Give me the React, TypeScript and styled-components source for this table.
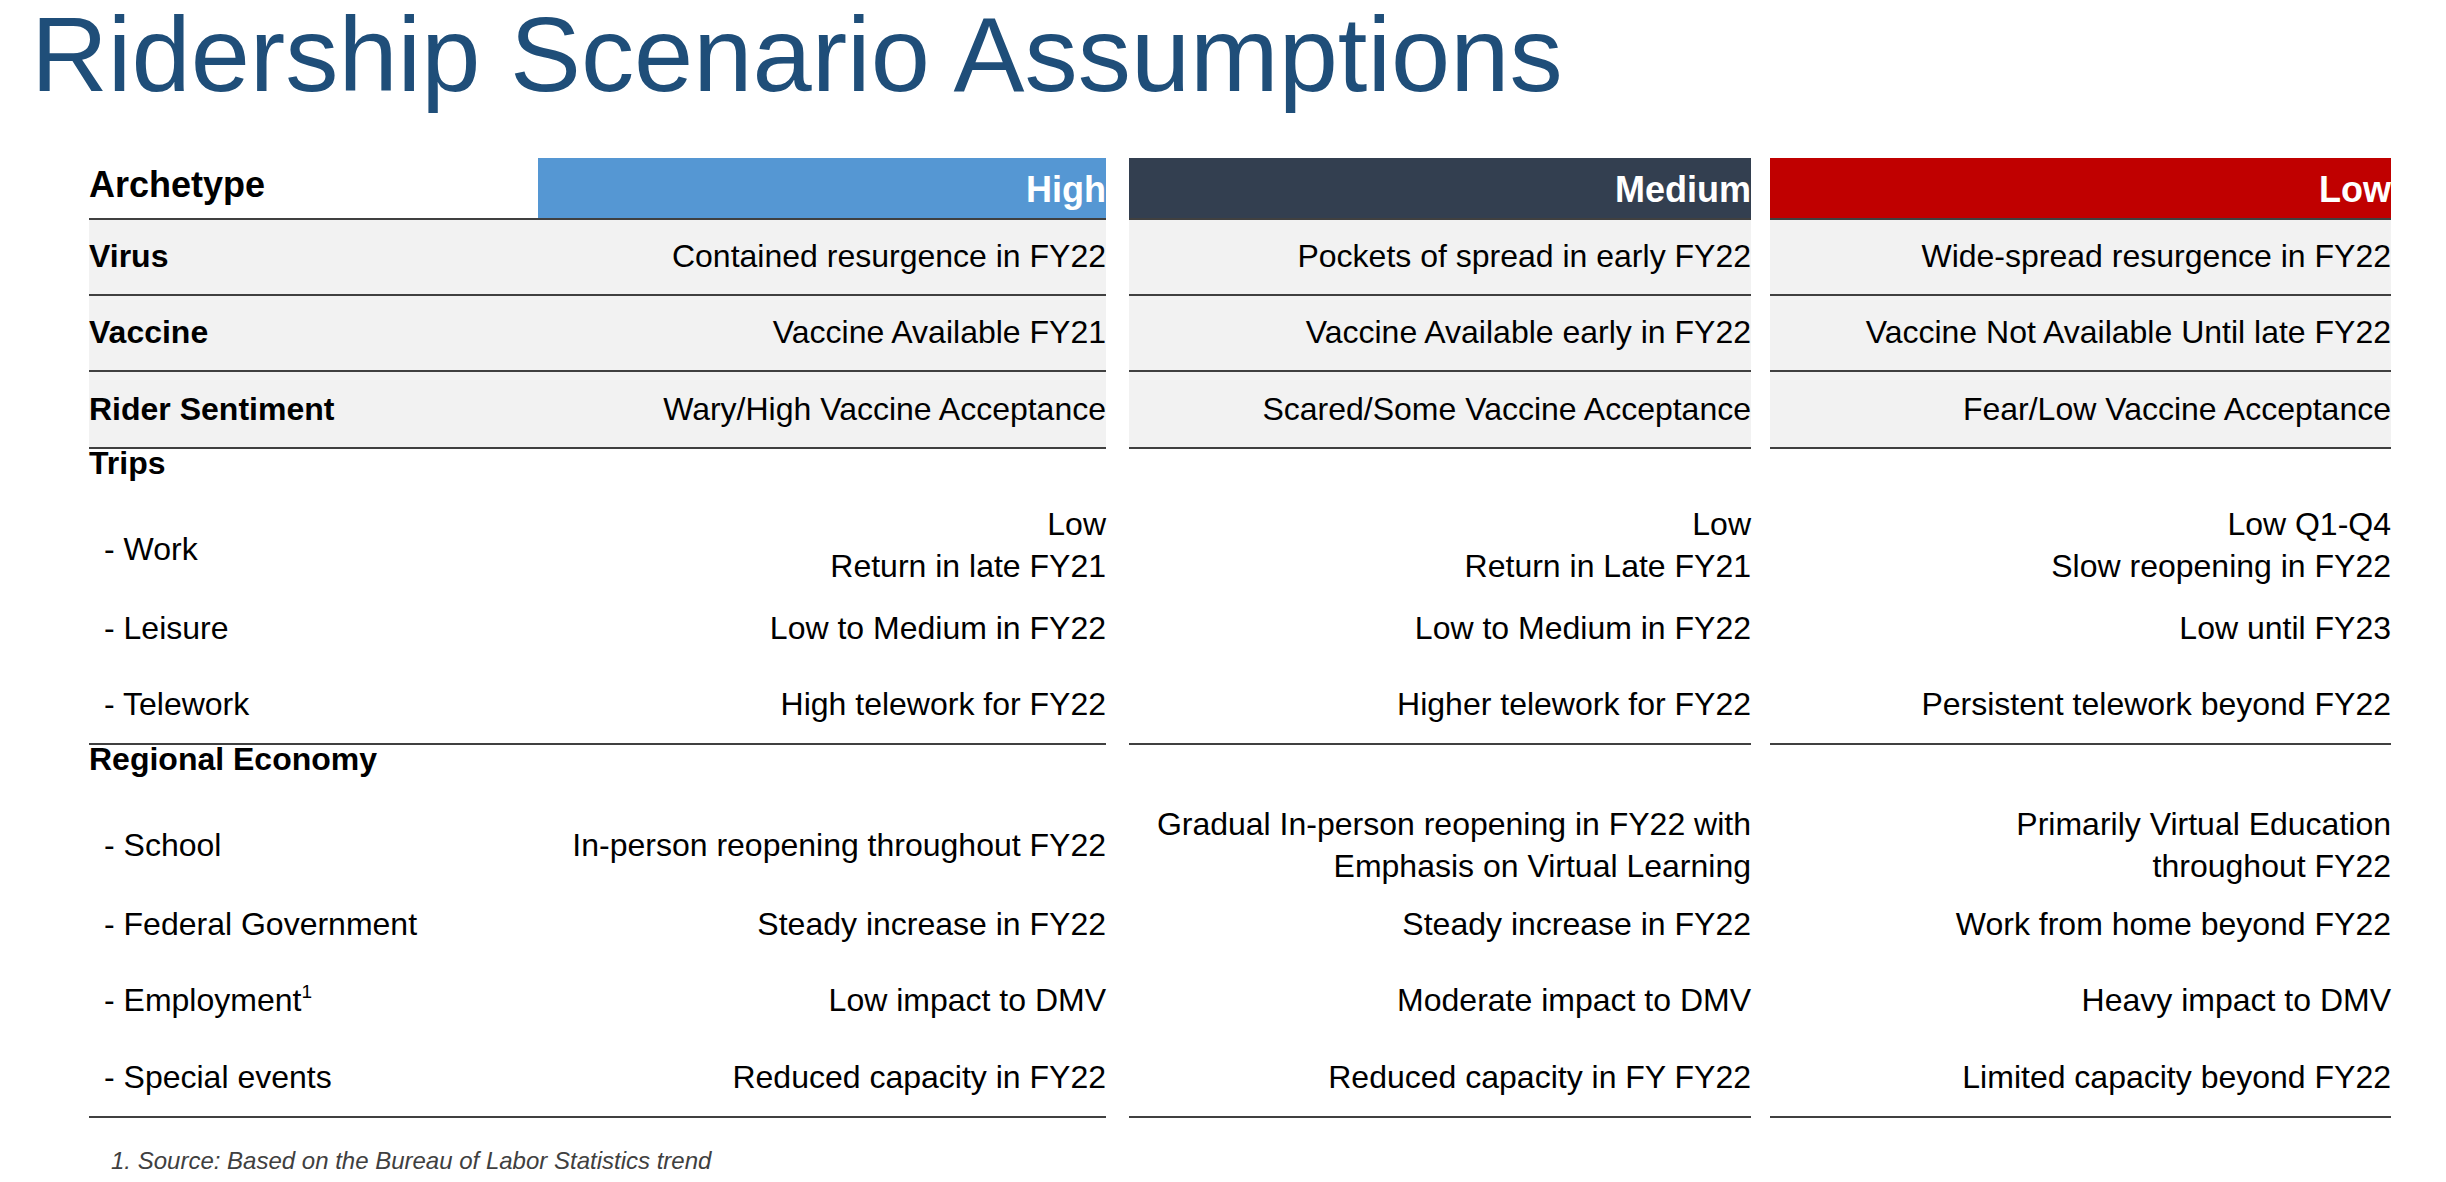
import React from "react";
import styled, { createGlobalStyle } from "styled-components";

const GlobalStyle = createGlobalStyle`
  html, body {
    margin: 0;
    padding: 0;
    background: #ffffff;
  }
  body {
    font-family: "Liberation Sans", Arial, Helvetica, sans-serif;
    color: #000000;
  }
`;

const Page = styled.div`
  width: 2446px;
  height: 1182px;
  box-sizing: border-box;
  padding-top: 2px;
  overflow: hidden;
`;

const Title = styled.h1`
  margin: 0;
  padding-left: 31px;
  font-size: 106.4px;
  line-height: 120px;
  margin-top: -7px;
  margin-bottom: -3px;
  font-weight: 400;
  color: #1f4e79;
  white-space: nowrap;
`;

const Table = styled.div`
  margin: 46px 0 0 89px;
  display: flex;
  flex-direction: column;
`;

const Row = styled.div<{ $h: number }>`
  display: flex;
  height: ${(p) => p.$h}px;
`;

const LabelCell = styled.div<{
  $shade?: boolean;
  $rule?: boolean;
  $bold?: boolean;
  $indent?: number;
  $top?: boolean;
  $size?: number;
  $shift?: number;
}>`
  flex: 0 0 449px;
  box-sizing: border-box;
  display: flex;
  align-items: ${(p) => (p.$top ? "flex-start" : "center")};
  padding-left: ${(p) => p.$indent ?? 0}px;
  padding-top: ${(p) => (p.$top ? 2 : p.$shift ?? 0)}px;
  font-size: ${(p) => p.$size ?? 32}px;
  line-height: ${(p) => (p.$top ? "24px" : "1.3")};
  font-weight: ${(p) => (p.$bold ? 700 : 400)};
  white-space: nowrap;
  background: ${(p) => (p.$shade ? "#f2f2f2" : "transparent")};
  border-bottom: ${(p) => (p.$rule ? "2px solid #404040" : "none")};
`;

const ValueCell = styled.div<{
  $w: number;
  $gap: number;
  $shade?: boolean;
  $rule?: boolean;
}>`
  flex: 0 0 ${(p) => p.$w}px;
  margin-left: ${(p) => p.$gap}px;
  box-sizing: border-box;
  display: flex;
  flex-direction: column;
  justify-content: center;
  align-items: flex-end;
  text-align: right;
  font-size: 32px;
  line-height: 1.3;
  white-space: nowrap;
  background: ${(p) => (p.$shade ? "#f2f2f2" : "transparent")};
  border-bottom: ${(p) => (p.$rule ? "2px solid #404040" : "none")};
`;

const HeaderCell = styled.div<{ $w: number; $gap: number; $bg: string }>`
  flex: 0 0 ${(p) => p.$w}px;
  margin-left: ${(p) => p.$gap}px;
  box-sizing: border-box;
  display: flex;
  align-items: center;
  justify-content: flex-end;
  padding-top: 4px;
  background: ${(p) => p.$bg};
  border-bottom: 2px solid #404040;
  color: #ffffff;
  font-size: 36px;
  line-height: 36px;
  font-weight: 700;
`;

const HeaderLabel = styled.span`
  padding-bottom: 6px;
`;

const Sup = styled.sup`
  font-size: 19px;
  line-height: 0;
  vertical-align: 13px;
`;

const Footnote = styled.p`
  margin: 29px 0 0 111px;
  font-size: 24px;
  line-height: 1.2;
  font-style: italic;
  color: #404040;
  white-space: nowrap;
`;

type Column = { key: string; w: number; gap: number; bg: string };

const columns: Column[] = [
  { key: "High", w: 568, gap: 0, bg: "#5597d3" },
  { key: "Medium", w: 622, gap: 23, bg: "#333f50" },
  { key: "Low", w: 621, gap: 19, bg: "#c00000" },
];

type Item = {
  label: string;
  sup?: string;
  shift?: number;
  values: string[][];
  h: number;
};

const shadedRows: Item[] = [
  {
    label: "Virus",
    h: 76,
    values: [
      ["Contained resurgence in FY22"],
      ["Pockets of spread in early FY22"],
      ["Wide-spread resurgence in FY22"],
    ],
  },
  {
    label: "Vaccine",
    h: 76,
    values: [
      ["Vaccine Available FY21"],
      ["Vaccine Available early in FY22"],
      ["Vaccine Not Available Until late FY22"],
    ],
  },
  {
    label: "Rider Sentiment",
    h: 77,
    values: [
      ["Wary/High Vaccine Acceptance"],
      ["Scared/Some Vaccine Acceptance"],
      ["Fear/Low Vaccine Acceptance"],
    ],
  },
];

type Section = { title: string; titleH: number; items: Item[] };

const sections: Section[] = [
  {
    title: "Trips",
    titleH: 52,
    items: [
      {
        label: "- Work",
        shift: 8,
        h: 90,
        values: [
          ["Low", "Return in late FY21"],
          ["Low", "Return in Late FY21"],
          ["Low Q1-Q4", "Slow reopening in FY22"],
        ],
      },
      {
        label: "- Leisure",
        h: 76,
        values: [
          ["Low to Medium in FY22"],
          ["Low to Medium in FY22"],
          ["Low until FY23"],
        ],
      },
      {
        label: "- Telework",
        h: 78,
        values: [
          ["High telework for FY22"],
          ["Higher telework for FY22"],
          ["Persistent telework beyond FY22"],
        ],
      },
    ],
  },
  {
    title: "Regional Economy",
    titleH: 61,
    items: [
      {
        label: "- School",
        h: 80,
        values: [
          ["In-person reopening throughout FY22"],
          ["Gradual In-person reopening in FY22 with", "Emphasis on Virtual Learning"],
          ["Primarily Virtual Education", "throughout FY22"],
        ],
      },
      {
        label: "- Federal Government",
        h: 77,
        values: [
          ["Steady increase in FY22"],
          ["Steady increase in FY22"],
          ["Work from home beyond FY22"],
        ],
      },
      {
        label: "- Employment",
        sup: "1",
        h: 76,
        values: [
          ["Low impact to DMV"],
          ["Moderate impact to DMV"],
          ["Heavy impact to DMV"],
        ],
      },
      {
        label: "- Special events",
        h: 79,
        values: [
          ["Reduced capacity in FY22"],
          ["Reduced capacity in FY FY22"],
          ["Limited capacity beyond FY22"],
        ],
      },
    ],
  },
];

const Values: React.FC<{ item: Item; shade?: boolean; rule?: boolean }> = ({
  item,
  shade,
  rule,
}) => (
  <>
    {columns.map((c, i) => (
      <ValueCell key={c.key} $w={c.w} $gap={c.gap} $shade={shade} $rule={rule}>
        {item.values[i].map((line) => (
          <span key={line}>{line}</span>
        ))}
      </ValueCell>
    ))}
  </>
);

export default function App() {
  return (
    <>
      <GlobalStyle />
      <Page>
        <Title>Ridership Scenario Assumptions</Title>
        <Table>
          <Row $h={62}>
            <LabelCell $bold $rule $size={36}>
              <HeaderLabel>Archetype</HeaderLabel>
            </LabelCell>
            {columns.map((c) => (
              <HeaderCell key={c.key} $w={c.w} $gap={c.gap} $bg={c.bg}>
                {c.key}
              </HeaderCell>
            ))}
          </Row>
          {shadedRows.map((r) => (
            <Row key={r.label} $h={r.h}>
              <LabelCell $bold $shade $rule>
                {r.label}
              </LabelCell>
              <Values item={r} shade rule />
            </Row>
          ))}
          {sections.map((s) => (
            <React.Fragment key={s.title}>
              <Row $h={s.titleH}>
                <LabelCell $bold $top>
                  {s.title}
                </LabelCell>
              </Row>
              {s.items.map((it, idx) => {
                const last = idx === s.items.length - 1;
                return (
                  <Row key={it.label} $h={it.h}>
                    <LabelCell $indent={15} $rule={last} $shift={it.shift}>
                      <span>
                        {it.label}
                        {it.sup && <Sup>{it.sup}</Sup>}
                      </span>
                    </LabelCell>
                    <Values item={it} rule={last} />
                  </Row>
                );
              })}
            </React.Fragment>
          ))}
        </Table>
        <Footnote>1. Source: Based on the Bureau of Labor Statistics trend</Footnote>
      </Page>
    </>
  );
}
